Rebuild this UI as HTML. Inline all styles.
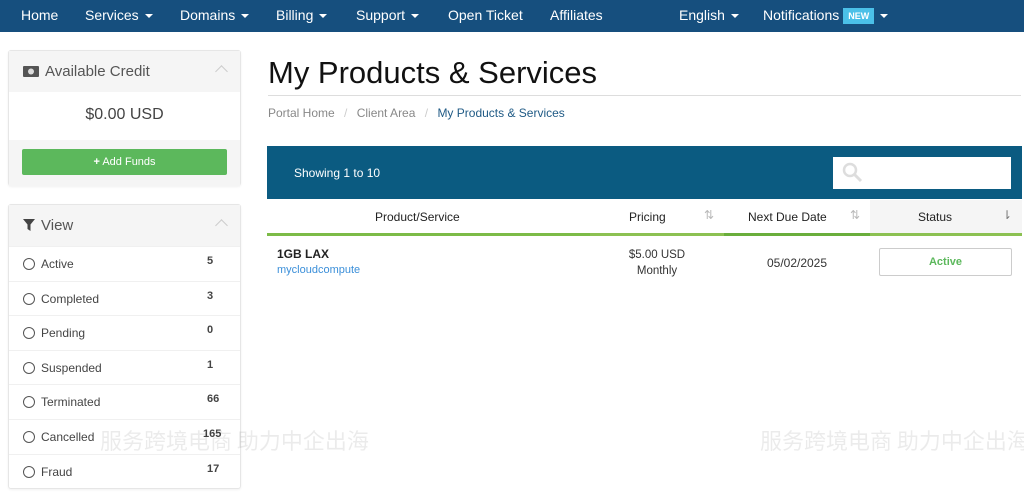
<!DOCTYPE html>
<html><head><meta charset="utf-8"><style>
*{box-sizing:border-box;margin:0;padding:0}
body{width:1024px;height:496px;overflow:hidden;background:#fff;font-family:"Liberation Sans",sans-serif;color:#333;position:relative}
.nav{position:absolute;left:0;top:0;width:1024px;height:32px;background:#164f7e}
.nav span{position:absolute;top:7px;color:#fff;font-size:14px;white-space:nowrap}
.car{display:inline-block;width:0;height:0;border-left:4px solid transparent;border-right:4px solid transparent;border-top:4px solid #fff;vertical-align:middle;margin-left:6px}
.badge{background:#4bc0e8;font-size:9px;font-weight:bold;padding:3px 5px;margin-left:4px;vertical-align:1px}
.panel{position:absolute;left:8px;width:233px;border:1px solid #e6e6e6;border-radius:3px;background:#fff;box-shadow:0 1px 2px rgba(0,0,0,.06)}
.ph{height:41px;background:#f5f5f5;font-size:15px;color:#555;padding:12px 0 0 14px;position:relative}
.chev{position:absolute;right:14px;top:16px;width:9px;height:9px;border-left:1.5px solid #ccc;border-top:1.5px solid #ccc;transform:rotate(45deg)}
.item{height:34.6px;border-top:1px solid #f0f0f0;font-size:12px;color:#444;position:relative;padding:10px 0 0 32px}
.item:before{content:"";position:absolute;left:14px;top:11px;width:10px;height:10px;border:1.3px solid #555;border-radius:50%}
.item b{position:absolute;left:198px;top:8px;font-size:11px;color:#444}
.wm{position:absolute;white-space:nowrap;font-size:22px;color:rgba(0,0,0,.08);font-family:'Noto Sans CJK SC',sans-serif}
</style></head><body>
<div class="nav">
<span style="left:21px">Home</span>
<span style="left:85px">Services<i class="car"></i></span>
<span style="left:180px">Domains<i class="car"></i></span>
<span style="left:276px">Billing<i class="car"></i></span>
<span style="left:356px">Support<i class="car"></i></span>
<span style="left:448px">Open Ticket</span>
<span style="left:550px">Affiliates</span>
<span style="left:679px">English<i class="car"></i></span>
<span style="left:763px">Notifications<b class="badge">NEW</b><i class="car"></i></span>
</div>

<div class="panel" style="top:50px;height:136px">
<div class="ph"><svg width="16" height="11" style="vertical-align:-1px;margin-right:6px"><rect x="0" y="0" width="16" height="11" rx="1" fill="#555"/><circle cx="8" cy="5.5" r="3" fill="#ddd"/></svg>Available Credit<i class="chev"></i></div>
<div style="height:48px;text-align:center;font-size:16px;color:#444;padding-top:14px">$0.00 USD</div>
<div style="height:46px;background:#f5f5f5;padding:9px 13px 0 13px"><div style="height:26px;background:#5cb85c;border-radius:2px;color:#fff;font-size:11px;text-align:center;padding-top:7px"><b>+</b> Add Funds</div></div>
</div>

<div class="panel" style="top:204px;height:285px">
<div class="ph"><svg width="12" height="12" style="vertical-align:-1px;margin-right:6px"><path d="M0 0H12L7.5 5.5V12L4.5 10V5.5Z" fill="#444"/></svg>View<i class="chev"></i></div>
<div class="item">Active<b>5</b></div>
<div class="item">Completed<b>3</b></div>
<div class="item">Pending<b>0</b></div>
<div class="item">Suspended<b>1</b></div>
<div class="item">Terminated<b>66</b></div>
<div class="item">Cancelled<b style="left:194px">165</b></div>
<div class="item">Fraud<b>17</b></div>
</div>

<div style="position:absolute;left:268px;top:55px;font-size:31px;color:#111">My Products &amp; Services</div>
<div style="position:absolute;left:268px;top:95px;width:753px;height:1px;background:#ddd"></div>
<div style="position:absolute;left:268px;top:106px;font-size:12px;color:#888">Portal Home <span style="color:#ccc;margin:0 6px">/</span> Client Area <span style="color:#ccc;margin:0 6px">/</span> <span style="color:#1f5a85">My Products &amp; Services</span></div>

<div style="position:absolute;left:267px;top:146px;width:755px;height:53px;background:#0b5b81"></div>
<div style="position:absolute;left:294px;top:166px;font-size:12px;color:#fff">Showing 1 to 10</div>
<div style="position:absolute;left:833px;top:157px;width:178px;height:32px;background:#fff"><svg width="22" height="22" style="position:absolute;left:9px;top:5px"><circle cx="8" cy="8" r="6" fill="none" stroke="#ddd" stroke-width="2.5"/><path d="M12.5 12.5L19 19" stroke="#ddd" stroke-width="3"/></svg></div>

<div style="position:absolute;left:870px;top:200px;width:152px;height:34px;background:#f5f5f5"></div>
<div style="position:absolute;left:267px;top:233px;width:755px;height:3px;background:#8cc152"></div>
<div style="position:absolute;left:724px;top:233px;width:146px;height:3px;background:#6aae3c"></div>
<div style="position:absolute;left:267px;top:233px;width:323px;height:3px;background:#7cbb47"></div>
<div style="position:absolute;left:375px;top:210px;font-size:12px;color:#222">Product/Service</div>
<div style="position:absolute;left:629px;top:210px;font-size:12px;color:#222">Pricing</div>
<div style="position:absolute;left:748px;top:210px;font-size:12px;color:#222">Next Due Date</div>
<div style="position:absolute;left:918px;top:210px;font-size:12px;color:#222">Status</div>
<div style="position:absolute;left:704px;top:208px;font-size:12px;color:#bbb">⇅</div>
<div style="position:absolute;left:850px;top:208px;font-size:12px;color:#bbb">⇅</div>
<div style="position:absolute;left:1002px;top:208px;font-size:12px;color:#777">⇂</div>

<div style="position:absolute;left:277px;top:247px;font-size:12px;font-weight:bold;color:#222">1GB LAX</div>
<div style="position:absolute;left:277px;top:264px;font-size:11px;color:#3b8fd9">mycloudcompute</div>
<div style="position:absolute;left:590px;top:247px;width:134px;text-align:center;font-size:11.5px;color:#333;line-height:16px">$5.00 USD<br>Monthly</div>
<div style="position:absolute;left:724px;top:256px;width:146px;text-align:center;font-size:12px;color:#333">05/02/2025</div>
<div style="position:absolute;left:879px;top:248px;width:133px;height:28px;border:1.5px solid #ccc;border-radius:2px;text-align:center;font-size:11px;font-weight:bold;color:#5cb85c;padding-top:7px">Active</div>

<div class="wm" style="left:760px;top:424px">服务跨境电商 助力中企出海</div>
<div class="wm" style="left:100px;top:424px">服务跨境电商 助力中企出海</div>
</body></html>
